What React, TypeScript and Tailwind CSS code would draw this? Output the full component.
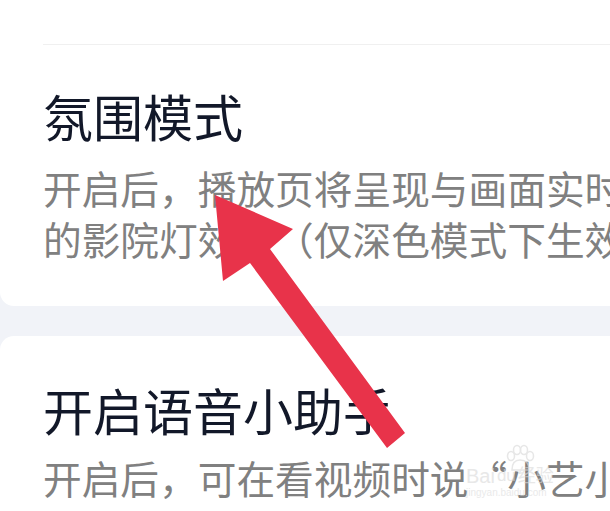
export default function App() {
  return (
    <div
      className="relative h-[511px] w-[610px] overflow-hidden bg-[#f1f3f8]"
      style={{ fontFamily: '"Noto Sans CJK SC", "Noto Sans", sans-serif' }}
    >
      {/* 氛围模式 card */}
      <div className="w-[680px] rounded-b-[14px] bg-white pb-[42px]">
        <div className="h-[44px]" />
        <div className="ml-[43px] h-px bg-[#f0f0f0]" />
        <div className="mt-[45px] whitespace-nowrap pl-[43px] text-[50px] leading-[50px] text-[#121829]">
          氛围模式
        </div>
        <div className="mt-[22px] whitespace-nowrap pl-[43px] text-[38.7px] leading-[51px] text-[#808080]">
          <div>开启后，播放页将呈现与画面实时变化</div>
          <div>的影院灯效果（仅深色模式下生效）</div>
        </div>
      </div>

      {/* 开启语音小助手 card */}
      <div className="mt-[30px] w-[680px] rounded-t-[14px] bg-white pt-[48px] pb-10">
        <div className="whitespace-nowrap pl-[43px] text-[50px] leading-[50px] text-[#121829]">
          开启语音小助手
        </div>
        <div className="mt-[18px] whitespace-nowrap pl-[43px] text-[38.7px] leading-[51px] text-[#808080]">
          开启后，可在看视频时说“小艺小艺”
        </div>
      </div>

      {/* Baidu watermark */}
      <div className="pointer-events-none absolute left-[466px] top-[444px] flex flex-col items-start opacity-60">
        <svg width="36" height="30" viewBox="0 0 36 30" className="ml-[36px]">
          <g fill="none" stroke="#d8d8d8" strokeWidth="1.5">
            <ellipse cx="9" cy="12" rx="3.5" ry="4.5" />
            <ellipse cx="15" cy="6" rx="3.5" ry="4.5" />
            <ellipse cx="22" cy="6" rx="3.5" ry="4.5" />
            <ellipse cx="28" cy="12" rx="3.5" ry="4.5" />
            <path d="M10 26 C10 18 14 16 18 16 C22 16 27 18 27 26 Z" />
          </g>
        </svg>
        <div
          className="-mt-[8px] flex items-end gap-[2px] text-[20px] leading-[20px] text-[#d9d9d9]"
          style={{ fontFamily: '"Liberation Sans", "Noto Sans CJK SC", sans-serif' }}
        >
          <span>Bai</span>
          <span className="text-[17px]">du</span>
          <span className="text-[18px]">经验</span>
        </div>
        <div
          className="text-[10px] leading-[14px] text-[#dcdcdc]"
          style={{ fontFamily: '"Liberation Sans", sans-serif' }}
        >
          jingyan.baidu.com
        </div>
      </div>

      {/* Red arrow annotation */}
      <svg className="pointer-events-none absolute left-0 top-0" width="610" height="511" viewBox="0 0 610 511">
        <polygon
          points="215,195 223,281 250,263 387,448 405,433 270,249 293,229"
          fill="#e8334a"
        />
      </svg>
    </div>
  )
}
